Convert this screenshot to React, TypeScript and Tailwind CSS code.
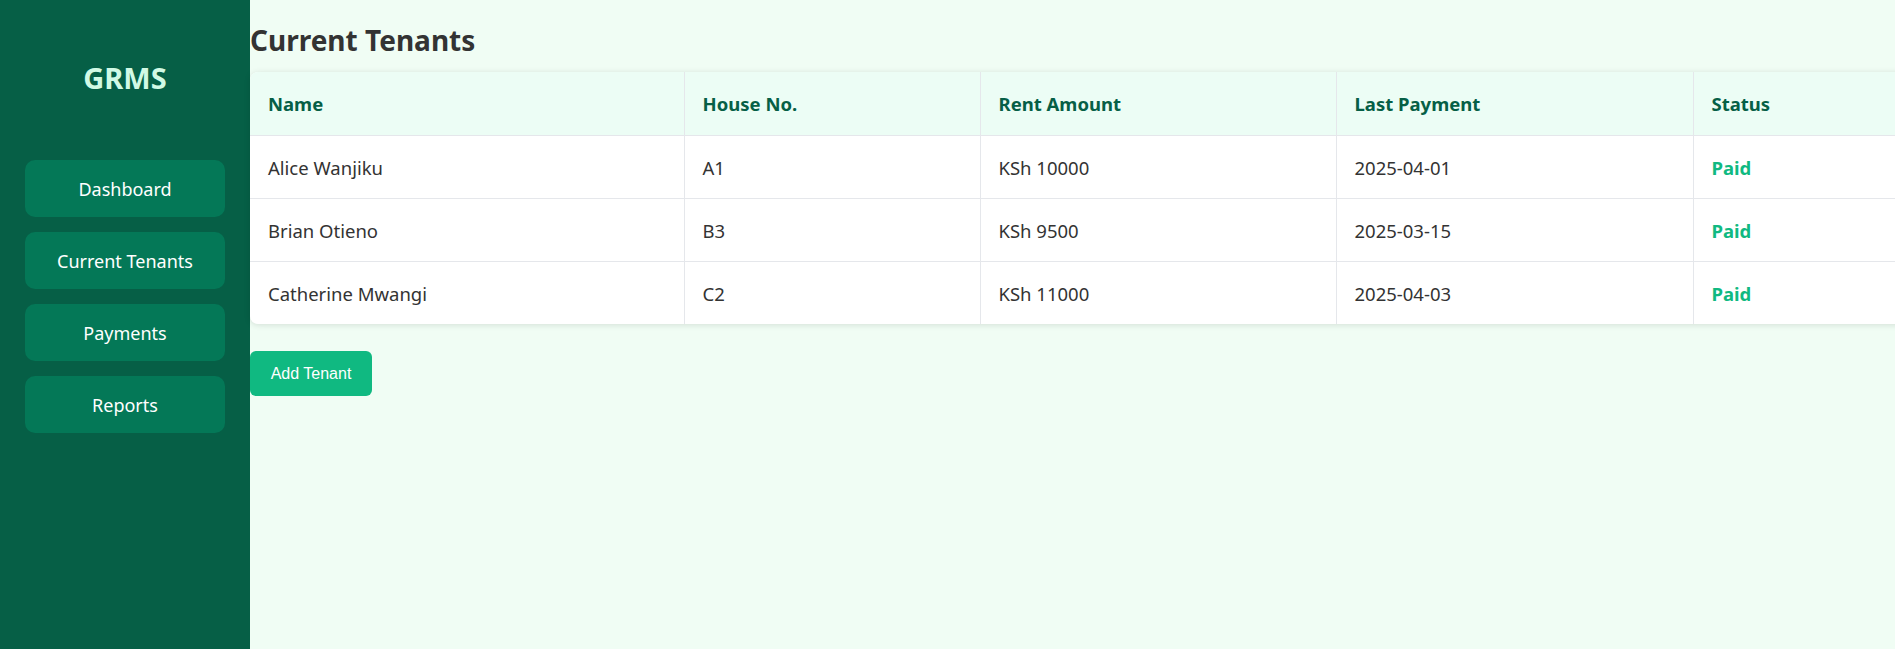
import React from "react";

const tenants = [
  { name: "Alice Wanjiku", house: "A1", rent: "KSh 10000", last: "2025-04-01", status: "Paid" },
  { name: "Brian Otieno", house: "B3", rent: "KSh 9500", last: "2025-03-15", status: "Paid" },
  { name: "Catherine Mwangi", house: "C2", rent: "KSh 11000", last: "2025-04-03", status: "Paid" },
];

const nav = ["Dashboard", "Current Tenants", "Payments", "Reports"];

export default function App() {
  return (
    <div className="flex h-[649px] w-[1895px] overflow-hidden bg-[#f0fdf4] font-['Noto_Sans',sans-serif] text-[#333]">
      <aside className="flex w-[250px] shrink-0 flex-col items-center bg-[#065f46] pt-[52px]">
        <h2 className="text-[29px] font-bold leading-[52px] text-[#d1fae5]">GRMS</h2>
        <nav className="mt-[56px] flex flex-col gap-[15px]">
          {nav.map((n) => (
            <a
              key={n}
              className="flex h-[57px] w-[200px] items-center justify-center rounded-[10px] bg-[#047857] pt-[2px] text-[18px] text-white"
            >
              {n}
            </a>
          ))}
        </nav>
      </aside>
      <main className="min-w-0 flex-1 pt-[14px]">
        <h2 className="mb-[6px] text-[28px] font-bold leading-[52px] text-[#333]">Current Tenants</h2>
        <div className="w-[1700px] overflow-hidden rounded-[8px] bg-white shadow-[0_1px_6px_rgba(0,0,0,0.12)]">
          <table className="w-full table-fixed border-collapse text-[18.5px]">
            <colgroup>
              <col className="w-[434px]" />
              <col className="w-[296px]" />
              <col className="w-[356px]" />
              <col className="w-[357px]" />
              <col />
            </colgroup>
            <thead>
              <tr className="h-[63px] bg-[#ecfdf5] text-left text-[#065f46]">
                {["Name", "House No.", "Rent Amount", "Last Payment", "Status"].map((h, i) => (
                  <th
                    key={h}
                    className={`border-b border-[#e5e7eb] px-[18px] pt-[2px] font-bold ${i > 0 ? "border-l" : ""}`}
                  >
                    {h}
                  </th>
                ))}
              </tr>
            </thead>
            <tbody>
              {tenants.map((t, r) => (
                <tr key={t.name} className={`h-[63px] ${r < 2 ? "border-b border-[#e5e7eb]" : ""}`}>
                  <td className="px-[18px] pt-[2px]">{t.name}</td>
                  <td className="border-l border-[#e5e7eb] px-[18px] pt-[2px]">{t.house}</td>
                  <td className="border-l border-[#e5e7eb] px-[18px] pt-[2px]">{t.rent}</td>
                  <td className="border-l border-[#e5e7eb] px-[18px] pt-[2px]">{t.last}</td>
                  <td className="border-l border-[#e5e7eb] px-[18px] pt-[2px] font-bold text-[#10b981]">{t.status}</td>
                </tr>
              ))}
            </tbody>
          </table>
        </div>
        <button className="mt-[27px] h-[45px] w-[122px] rounded-[6px] bg-[#10b981] text-center font-['Liberation_Sans',Arial,sans-serif] text-[16px] text-white">
          Add Tenant
        </button>
      </main>
    </div>
  );
}
